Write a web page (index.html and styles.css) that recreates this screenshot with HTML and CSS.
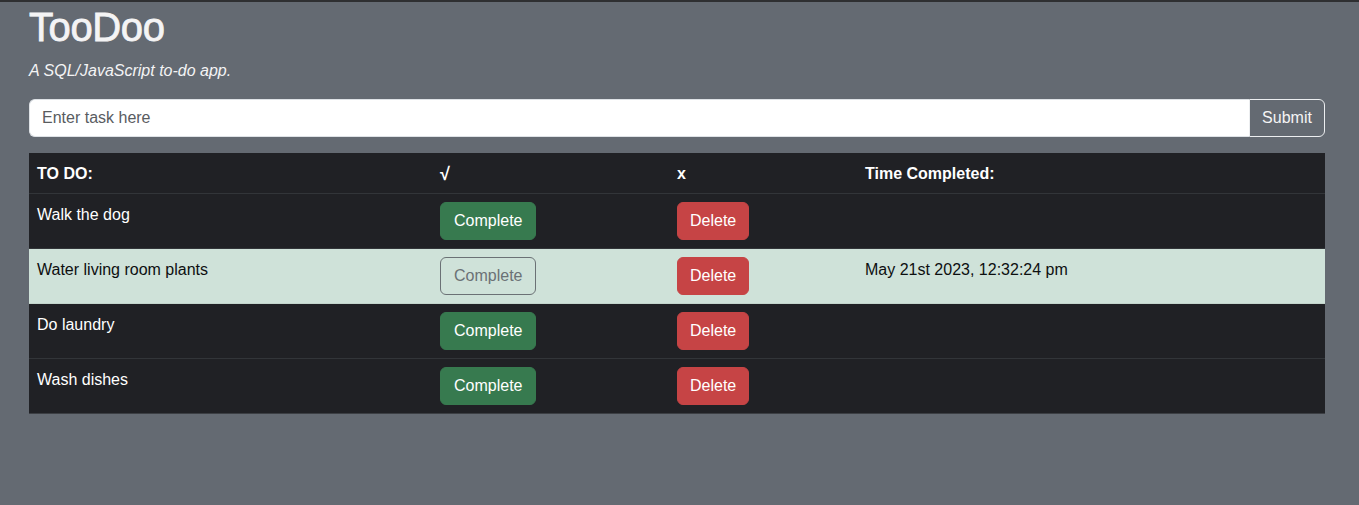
FILE: index.html
```html
<!DOCTYPE html>
<html lang="en">
<head>
<meta charset="utf-8">
<title>TooDoo</title>
<link rel="stylesheet" href="styles.css">
</head>
<body>
<div class="container">
  <h1 class="title">TooDoo</h1>
  <p class="subtitle">A SQL/JavaScript to-do app.</p>
  <form class="task-form">
    <input class="task-input" type="text" placeholder="Enter task here">
    <button class="submit-btn" type="button">Submit</button>
  </form>
  <table class="todo-table">
    <colgroup>
      <col class="c1"><col class="c2"><col class="c3"><col class="c4">
    </colgroup>
    <thead>
      <tr><th>TO DO:</th><th class="check">√</th><th>x</th><th>Time Completed:</th></tr>
    </thead>
    <tbody>
      <tr><td>Walk the dog</td><td><button class="btn btn-complete">Complete</button></td><td><button class="btn btn-delete">Delete</button></td><td></td></tr>
      <tr class="done"><td>Water living room plants</td><td><button class="btn btn-outline">Complete</button></td><td><button class="btn btn-delete">Delete</button></td><td>May 21st 2023, 12:32:24 pm</td></tr>
      <tr><td>Do laundry</td><td><button class="btn btn-complete">Complete</button></td><td><button class="btn btn-delete">Delete</button></td><td></td></tr>
      <tr><td>Wash dishes</td><td><button class="btn btn-complete">Complete</button></td><td><button class="btn btn-delete">Delete</button></td><td></td></tr>
    </tbody>
  </table>
</div>
</body>
</html>
```
FILE: styles.css
```css
* { box-sizing: border-box; }
html, body { margin: 0; padding: 0; }
body {
  background: #646a72;
  border-top: 2px solid #2e2f31;
  font-family: "Liberation Sans", Arial, sans-serif;
  font-size: 16px;
  line-height: 24px;
  color: #fff;
  min-height: 505px;
}
.container {
  width: 1296px;
  margin-left: 29px;
  padding-top: 1px;
}
.title {
  margin: 0 0 8px 0;
  font-size: 40px;
  line-height: 48px;
  font-weight: 400;
  letter-spacing: -0.4px;
  -webkit-text-stroke: 0.8px #f4f4f5;
  color: #f4f4f5;
}
.subtitle {
  margin: 0 0 16px 0;
  font-style: italic;
  color: #f4f4f5;
}
.task-form {
  display: flex;
  height: 38px;
  margin: 0 0 16px 0;
}
.task-input {
  flex: 1;
  height: 38px;
  border: 1px solid #dee2e6;
  border-right: none;
  border-radius: 6px 0 0 6px;
  padding: 6px 12px;
  font-family: inherit;
  font-size: 16px;
  background: #fff;
  color: #212529;
  outline: none;
}
.task-input::placeholder { color: #595c5f; }
.submit-btn {
  width: 76px;
  height: 38px;
  background: #646a72;
  border: 1px solid #eceef0;
  border-radius: 0 6px 6px 0;
  color: #f4f4f5;
  font-family: inherit;
  font-size: 16px;
  padding: 6px 12px;
}
.todo-table {
  width: 1296px;
  border-collapse: collapse;
  table-layout: fixed;
  background: #202125;
  margin-bottom: 16px;
}
.c1 { width: 403px; }
.c2 { width: 237px; }
.c3 { width: 188px; }
.c4 { width: 468px; }
.todo-table th, .todo-table td {
  padding: 9px 8px 7px 8px;
  text-align: left;
  vertical-align: top;
  border-bottom: 1px solid #323539;
  color: #fff;
}
.todo-table th { font-weight: 700; }
.todo-table th.check { font-size: 18px; }
.todo-table td .btn { margin-top: -1px; margin-bottom: 1px; }
.todo-table tbody tr:last-child td { border-bottom-color: #3c3f44; }
.todo-table tr.done td {
  background: #cfe2d9;
  color: #0d0f10;
  border-bottom-color: #c3d5cc;
}
.btn {
  display: inline-block;
  height: 38px;
  padding: 6px 13px;
  border: 1px solid transparent;
  border-radius: 6px;
  font-family: inherit;
  font-size: 16px;
  line-height: 24px;
  color: #fff;
  cursor: pointer;
}
.btn-complete { background: #377a4f; border-color: #377a4f; }
.btn-delete { background: #c64445; border-color: #c64445; padding: 6px 12px; }
.btn-outline {
  background: transparent;
  border-color: #6b7175;
  color: #6b7175;
}
```
